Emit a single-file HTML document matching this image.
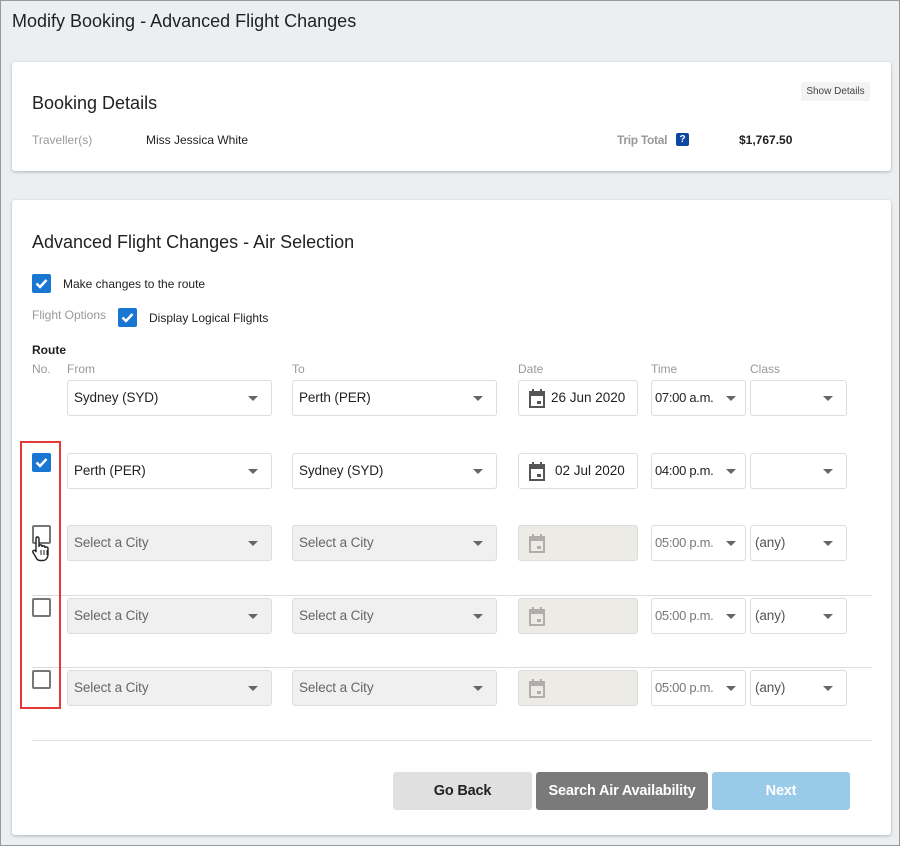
<!DOCTYPE html>
<html><head><style>
*{box-sizing:border-box;margin:0;padding:0}
body{width:900px;height:846px;background:#eceff2;font-family:"Liberation Sans",sans-serif;color:#222;position:relative;overflow:hidden;box-shadow:inset 0 0 0 1px #999}
.a{position:absolute}
.card{position:absolute;background:#fff;border-radius:3px;box-shadow:0 1px 3px rgba(0,0,0,.25)}
.lbl{position:absolute;font-size:12px;color:#999}
.sel{position:absolute;height:36px;border:1px solid #ddd;border-radius:3px;background:#fff;font-size:13.5px;line-height:34px;padding-left:6px;color:#222;white-space:nowrap;letter-spacing:-.1px}
.sel.dis{background:#f0f0f0;color:#666}
.sel .car{position:absolute;right:13px;top:15px;width:0;height:0;border-left:5px solid transparent;border-right:5px solid transparent;border-top:5px solid #666}
.sel.t{font-size:13px;padding-left:3px;letter-spacing:-.3px}
.sel.t .car{right:9px}
.date{position:absolute;height:36px;width:120px;border:1px solid #ddd;border-radius:3px;background:#fff;font-size:13.5px;line-height:34px}
.date.dis{background:#ecebe6}
.cal{position:absolute;left:9px;top:8px}
.cb{position:absolute;width:19px;height:19px;border-radius:2px}
.cb.on{background:#1976d2}
.cb.off{border:2px solid #777;background:#fff}
.hr{position:absolute;height:1px;background:#ddd}
.btn{position:absolute;top:772px;height:38px;border-radius:3px;font-size:14.5px;font-weight:bold;text-align:center;line-height:38px;letter-spacing:-.2px}
</style></head><body>
<div class="a" style="left:12px;top:11px;font-size:18px;color:#222">Modify Booking - Advanced Flight Changes</div>

<div class="card" style="left:12px;top:62px;width:879px;height:109px">
<div class="a" style="left:20px;top:31px;font-size:18px">Booking Details</div>
<div class="lbl" style="left:20px;top:71px">Traveller(s)</div>
<div class="a" style="left:134px;top:71px;font-size:12px">Miss Jessica White</div>
<div class="a" style="left:789px;top:20px;width:69px;height:19px;background:#f3f3f3;border-radius:2px;font-size:10px;line-height:19px;text-align:center;color:#444">Show Details</div>
<div class="lbl" style="left:605px;top:71px;font-weight:bold;letter-spacing:-.3px">Trip Total</div>
<div class="a" style="left:664px;top:71px;width:13px;height:13px;background:#0d47a1;border-radius:2px;color:#fff;font-size:10px;font-weight:bold;text-align:center;line-height:13px">?</div>
<div class="a" style="left:727px;top:71px;font-size:12px;font-weight:bold">$1,767.50</div>
</div>

<div class="card" style="left:12px;top:200px;width:879px;height:635px"></div>
<div class="a" style="left:32px;top:232px;font-size:18px">Advanced Flight Changes - Air Selection</div>
<div class="cb on" style="left:32px;top:274px"><svg width="19" height="19"><path d="M4.5 9.5l3.5 3.5 6.5-7" stroke="#fff" stroke-width="2.5" fill="none"/></svg></div>
<div class="a" style="left:63px;top:277px;font-size:12px">Make changes to the route</div>
<div class="lbl" style="left:32px;top:308px">Flight Options</div>
<div class="cb on" style="left:118px;top:308px"><svg width="19" height="19"><path d="M4.5 9.5l3.5 3.5 6.5-7" stroke="#fff" stroke-width="2.5" fill="none"/></svg></div>
<div class="a" style="left:149px;top:311px;font-size:12px">Display Logical Flights</div>
<div class="a" style="left:32px;top:343px;font-size:12px;font-weight:bold">Route</div>
<div class="lbl" style="left:32px;top:362px">No.</div>
<div class="lbl" style="left:67px;top:362px">From</div>
<div class="lbl" style="left:292px;top:362px">To</div>
<div class="lbl" style="left:518px;top:362px">Date</div>
<div class="lbl" style="left:651px;top:362px">Time</div>
<div class="lbl" style="left:750px;top:362px">Class</div>

<div class="sel" style="left:67px;top:380px;width:205px">Sydney (SYD)<i class="car"></i></div>
<div class="sel" style="left:292px;top:380px;width:205px">Perth (PER)<i class="car"></i></div>
<div class="date" style="left:518px;top:380px"><svg class="cal" width="18" height="20" viewBox="0 0 18 20"><path d="M2 3h14v15H2z" fill="none" stroke="#555" stroke-width="2"/><path d="M2 3h14v4H2z" fill="#555"/><path d="M5 0v4M13 0v4" stroke="#555" stroke-width="2"/><rect x="9" y="12" width="4" height="3" fill="#555"/></svg><span class="a" style="left:32px">26 Jun 2020</span></div>
<div class="sel t" style="left:651px;top:380px;width:95px">07:00 a.m.<i class="car"></i></div>
<div class="sel" style="left:750px;top:380px;width:97px"><i class="car"></i></div>

<div class="cb on" style="left:32px;top:453px"><svg width="19" height="19"><path d="M4.5 9.5l3.5 3.5 6.5-7" stroke="#fff" stroke-width="2.5" fill="none"/></svg></div>
<div class="sel" style="left:67px;top:453px;width:205px">Perth (PER)<i class="car"></i></div>
<div class="sel" style="left:292px;top:453px;width:205px">Sydney (SYD)<i class="car"></i></div>
<div class="date" style="left:518px;top:453px"><svg class="cal" width="18" height="20" viewBox="0 0 18 20"><path d="M2 3h14v15H2z" fill="none" stroke="#555" stroke-width="2"/><path d="M2 3h14v4H2z" fill="#555"/><path d="M5 0v4M13 0v4" stroke="#555" stroke-width="2"/><rect x="9" y="12" width="4" height="3" fill="#555"/></svg><span class="a" style="left:36px">02 Jul 2020</span></div>
<div class="sel t" style="left:651px;top:453px;width:95px">04:00 p.m.<i class="car"></i></div>
<div class="sel" style="left:750px;top:453px;width:97px"><i class="car"></i></div>

<div class="cb off" style="left:32px;top:525px"></div>
<svg class="a" style="left:31px;top:535px" width="20" height="28" viewBox="0 0 20 28"><path d="M6 2c1 0 2 .5 2 2v8l0-1c0-1.5 3-1.5 3 0v1c0-1.5 3-1.5 3 0v1c0-1.5 3-1.5 3 .5v6c0 3-2 6-5 6h-3c-2 0-3-1-4-3l-3-5c-1-1.5 1-3 2.5-1.5L5 17V4c0-1.5 .5-2 1-2z" fill="#fff" stroke="#222" stroke-width="1.4"/><path d="M10 15v5M13 15v5M16 15v5" stroke="#222" stroke-width="1"/></svg>
<div class="sel dis" style="left:67px;top:525px;width:205px">Select a City<i class="car"></i></div>
<div class="sel dis" style="left:292px;top:525px;width:205px">Select a City<i class="car"></i></div>
<div class="date dis" style="left:518px;top:525px"><svg class="cal" width="18" height="20" viewBox="0 0 18 20" opacity=".4"><path d="M2 3h14v15H2z" fill="none" stroke="#555" stroke-width="2"/><path d="M2 3h14v4H2z" fill="#555"/><path d="M5 0v4M13 0v4" stroke="#555" stroke-width="2"/><rect x="9" y="12" width="4" height="3" fill="#555"/></svg></div>
<div class="sel t" style="left:651px;top:525px;width:95px;color:#777">05:00 p.m.<i class="car"></i></div>
<div class="sel" style="left:750px;top:525px;width:97px;padding-left:4px;color:#555">(any)<i class="car"></i></div>

<div class="hr" style="left:32px;top:595px;width:840px"></div>
<div class="cb off" style="left:32px;top:598px"></div>
<div class="sel dis" style="left:67px;top:598px;width:205px">Select a City<i class="car"></i></div>
<div class="sel dis" style="left:292px;top:598px;width:205px">Select a City<i class="car"></i></div>
<div class="date dis" style="left:518px;top:598px"><svg class="cal" width="18" height="20" viewBox="0 0 18 20" opacity=".4"><path d="M2 3h14v15H2z" fill="none" stroke="#555" stroke-width="2"/><path d="M2 3h14v4H2z" fill="#555"/><path d="M5 0v4M13 0v4" stroke="#555" stroke-width="2"/><rect x="9" y="12" width="4" height="3" fill="#555"/></svg></div>
<div class="sel t" style="left:651px;top:598px;width:95px;color:#777">05:00 p.m.<i class="car"></i></div>
<div class="sel" style="left:750px;top:598px;width:97px;padding-left:4px;color:#555">(any)<i class="car"></i></div>

<div class="hr" style="left:32px;top:667px;width:840px"></div>
<div class="cb off" style="left:32px;top:670px"></div>
<div class="sel dis" style="left:67px;top:670px;width:205px">Select a City<i class="car"></i></div>
<div class="sel dis" style="left:292px;top:670px;width:205px">Select a City<i class="car"></i></div>
<div class="date dis" style="left:518px;top:670px"><svg class="cal" width="18" height="20" viewBox="0 0 18 20" opacity=".4"><path d="M2 3h14v15H2z" fill="none" stroke="#555" stroke-width="2"/><path d="M2 3h14v4H2z" fill="#555"/><path d="M5 0v4M13 0v4" stroke="#555" stroke-width="2"/><rect x="9" y="12" width="4" height="3" fill="#555"/></svg></div>
<div class="sel t" style="left:651px;top:670px;width:95px;color:#777">05:00 p.m.<i class="car"></i></div>
<div class="sel" style="left:750px;top:670px;width:97px;padding-left:4px;color:#555">(any)<i class="car"></i></div>

<div class="a" style="left:20px;top:441px;width:41px;height:268px;border:2px solid #e53935"></div>
<div class="hr" style="left:32px;top:740px;width:840px"></div>

<div class="btn" style="left:393px;width:139px;background:#e0e0e0;color:#222">Go Back</div>
<div class="btn" style="left:536px;width:172px;background:#7a7a7a;color:#fff">Search Air Availability</div>
<div class="btn" style="left:712px;width:138px;background:#99cbe9;color:#fff">Next</div>
</body></html>
